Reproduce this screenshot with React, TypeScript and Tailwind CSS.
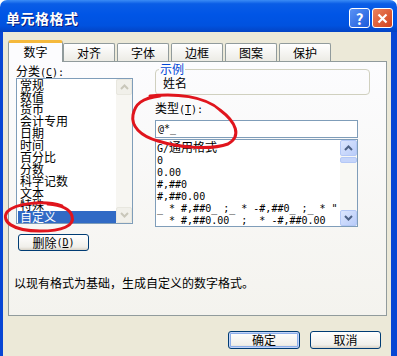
const categories = ['常规', '数值', '货币', '会计专用', '日期', '时间', '百分比', '分数', '科学记数', '文本', '特殊', '自定义']
const formats = ['G/通用格式', '0', '0.00', '#,##0', '#,##0.00', '_ * #,##0_ ;_ * -#,##0_ ;_ * "', '_ * #,##0.00_ ;_ * -#,##0.00_']

// half-width latin, as the dialog font draws it
function Mono({ children }: { children: React.ReactNode }) {
  return <span className="font-['DejaVu_Sans_Mono',monospace] text-[10px]">{children}</span>
}

function Chevron({ up, color }: { up?: boolean; color: string }) {
  return (
    <svg width="9" height="6" viewBox="0 0 9 6">
      <path d={up ? 'M1 5 L4.5 1.5 L8 5' : 'M1 1 L4.5 4.5 L8 1'} fill="none" stroke={color} strokeWidth="2" />
    </svg>
  )
}

function ArrowButton({ up, active }: { up?: boolean; active?: boolean }) {
  return (
    <div
      className={
        active
          ? 'h-[16px] flex items-center justify-center rounded-[2px] border border-[#B4C8F6] bg-[linear-gradient(135deg,#DCE6FE,#B9CCF9)]'
          : 'h-[16px] flex items-center justify-center rounded-[2px] border border-[#E8E7DF] bg-[#F1F0EA]'
      }
    >
      <Chevron up={up} color={active ? '#4D6185' : '#C9C7BA'} />
    </div>
  )
}

function Tab({ label, active }: { label: string; active?: boolean }) {
  if (active) {
    return (
      <div className="relative z-10 -mb-px h-[22px] w-[55px] rounded-t-[3px] border-x border-[#919B9C] border-t-[3px] border-t-[#F5B93C] bg-[#FCFCFE] flex justify-center pt-[3px] leading-[12px]">
        {label}
      </div>
    )
  }
  return (
    <div className="h-[18px] w-[52px] rounded-t-[2px] border-x border-t border-[#919B9C] bg-[linear-gradient(#FFFFFF,#ECEBE5)] flex items-center justify-center leading-none">
      {label}
    </div>
  )
}

function FormatRow({ text }: { text: string }) {
  // split CJK from latin so the latin part gets the half-width face
  const parts = text.split(/([\u4e00-\u9fff]+)/).filter(Boolean)
  return (
    <div className="h-[12px] leading-[12px] whitespace-pre">
      {parts.map((p, i) => (/[\u4e00-\u9fff]/.test(p) ? <span key={i}>{p}</span> : <Mono key={i}>{p}</Mono>))}
    </div>
  )
}

export default function App() {
  return (
    <div className="relative w-[397px] h-[356px] overflow-hidden bg-white font-['Noto_Sans_CJK_SC',sans-serif] text-[12px] text-black">
      {/* title bar */}
      <div className="h-[32px] rounded-t-[7px] bg-[linear-gradient(180deg,#3B8CF5_0%,#0A5DE6_12%,#0055E6_45%,#0052DF_80%,#0443C4_100%)] flex items-center pl-[6px] pr-[4px] pt-[4px]">
        <span className="text-white font-bold text-[14px] tracking-[0.5px] [text-shadow:1px_1px_#0A1E80]">单元格格式</span>
        <div className="ml-auto flex gap-[2px]">
          <div className="w-[21px] h-[20px] rounded-[3px] border border-white bg-[linear-gradient(135deg,#5A93F5,#1C59DB)] flex items-center justify-center text-white font-bold text-[15px] leading-none">
            ?
          </div>
          <div className="w-[21px] h-[20px] rounded-[3px] border border-white bg-[linear-gradient(135deg,#E9825E,#D2401B)] flex items-center justify-center">
            <svg width="11" height="11" viewBox="0 0 11 11">
              <path d="M1.5 1.5 L9.5 9.5 M9.5 1.5 L1.5 9.5" stroke="white" strokeWidth="2.2" />
            </svg>
          </div>
        </div>
      </div>

      {/* window body */}
      <div className="h-[324px] border-l-[3px] border-r-[6px] border-[#0846D4] bg-[#ECE9D8] flex flex-col pt-[7px] pl-[5px] pr-[4px]">
        <div className="flex items-end h-[22px] gap-[2px]">
          <div className="flex items-end">
            <Tab label="数字" active />
            <Tab label="对齐" />
          </div>
          <Tab label="字体" />
          <Tab label="边框" />
          <Tab label="图案" />
          <Tab label="保护" />
        </div>

        {/* tab panel */}
        <div className="h-[255px] border border-[#919B9C] bg-[linear-gradient(#FCFCFE,#F4F3EE)] flex flex-col pl-[5px] pt-[3px]">
          <div className="flex">
            {/* categories */}
            <div className="ml-[2px] w-[117px] flex flex-col">
              <div className="h-[13px] leading-[12px]">
                分类<Mono>
                  (<u>C</u>):
                </Mono>
              </div>
              <div className="h-[146px] border border-[#7F9DB9] bg-white flex">
                <div className="flex-1 flex flex-col pl-px">
                  {categories.map((c) => (
                    <div
                      key={c}
                      className={
                        c === '自定义'
                          ? 'h-[12px] leading-[12px] bg-[#316AC5] text-white pl-[2px]'
                          : 'h-[12px] leading-[12px] pl-[2px]'
                      }
                    >
                      {c}
                    </div>
                  ))}
                </div>
                <div className="w-[16px] flex flex-col justify-between bg-[#F7F6F2]">
                  <ArrowButton up />
                  <ArrowButton />
                </div>
              </div>
              <div className="mt-[10px] ml-[2px] w-[71px] h-[17px] border border-[#003C74] rounded-[3px] bg-[linear-gradient(#FFFFFF,#F0EFEA_80%,#D8D2C6)] flex items-center justify-center leading-none">
                删除<Mono>
                  (<u>D</u>)
                </Mono>
              </div>
            </div>

            {/* sample + type */}
            <div className="ml-[22px] -mt-[2px] w-[215px] flex flex-col">
              <fieldset className="border border-[#D0D0BF] rounded-[4px] px-[7px] pb-[5px]">
                <legend className="ml-[-4px] px-[1px] leading-[12px] text-[#0046D5]">示例</legend>
                <div className="leading-[12px] pt-[2px]">姓名</div>
              </fieldset>
              <div className="mt-[7px] leading-[12px]">
                类型<Mono>
                  (<u>T</u>):
                </Mono>
              </div>
              <div className="mt-[4px] w-[203px] h-[18px] border border-[#7F9DB9] bg-white flex items-center pl-[2px] leading-none">
                <Mono>@*_</Mono>
              </div>
              <div className="mt-px w-[203px] h-[88px] border border-[#7F9DB9] bg-white flex">
                <div className="flex-1 min-w-0 overflow-hidden flex flex-col pt-px pl-px">
                  {formats.map((f) => (
                    <FormatRow key={f} text={f} />
                  ))}
                </div>
                <div className="w-[17px] flex flex-col bg-[#F8F8F4]">
                  <ArrowButton up active />
                  <div className="h-[6px] mt-px rounded-[2px] border border-[#B4C8F6] bg-[#C5D5FA]" />
                  <div className="flex-1" />
                  <ArrowButton active />
                </div>
              </div>
            </div>
          </div>

          <div className="mt-[26px] leading-[12px]">以现有格式为基础，生成自定义的数字格式。</div>
        </div>

        {/* dialog buttons */}
        <div className="mt-[15px] flex justify-end gap-[10px] pr-[6px]">
          <div className="w-[72px] h-[18px] border border-[#003C74] rounded-[3px] bg-[linear-gradient(#FFFFFF,#F0EFEA_80%,#D8D2C6)] shadow-[inset_0_0_0_1px_#C3D4F8,inset_0_0_0_2px_#8CAEEA] flex items-center justify-center leading-none">
            确定
          </div>
          <div className="w-[71px] h-[18px] border border-[#003C74] rounded-[3px] bg-[linear-gradient(#FFFFFF,#F0EFEA_80%,#D8D2C6)] flex items-center justify-center leading-none">
            取消
          </div>
        </div>
      </div>

      {/* red pen marks */}
      <svg className="absolute inset-0 pointer-events-none" width="397" height="356" viewBox="0 0 397 356">
        <path
          d="M62 206 C45 200, 15 203, 7 212 C1 221, 12 231, 40 231 C62 231, 75 226, 72 216 C70 209, 60 205, 48 204"
          fill="none"
          stroke="#E0151D"
          strokeWidth="3"
          strokeLinecap="round"
        />
        <path
          d="M150 96 C175 93, 205 96, 220 110 C236 122, 242 136, 228 144 C212 150, 180 148, 158 141 C140 136, 131 126, 133 115 C135 104, 142 98, 160 96"
          fill="none"
          stroke="#E0151D"
          strokeWidth="3"
          strokeLinecap="round"
        />
      </svg>
    </div>
  )
}
